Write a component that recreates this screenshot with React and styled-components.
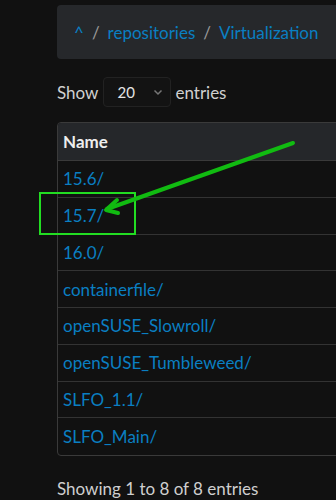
import React from "react";
import styled, { createGlobalStyle } from "styled-components";

const GlobalStyle = createGlobalStyle`
  html, body {
    margin: 0;
    padding: 0;
    background: #111111;
    overflow: hidden;
  }
  body {
    font-family: Lato, "Noto Sans", sans-serif;
    color: #cfcfcf;
  }
`;

const Page = styled.div`
  position: relative;
  width: 336px;
  height: 500px;
  overflow: hidden;
`;

const Content = styled.div`
  width: 420px;
  padding: 5px 0 0 57px;
  box-sizing: border-box;
  display: flex;
  flex-direction: column;
`;

const Breadcrumb = styled.nav`
  height: 54px;
  background: #26282b;
  border-radius: 4px;
  display: flex;
  align-items: center;
  gap: 8px;
  padding: 0 17px;
  font-size: 17px;
`;

const Crumb = styled.a`
  color: #0a7fc2;
  text-decoration: none;
`;

const Sep = styled.span`
  color: #9a9a9a;
`;

const LengthRow = styled.div`
  display: flex;
  align-items: center;
  height: 30px;
  margin-top: 18px;
  font-size: 17px;
  color: #d0d0d0;
`;

const Select = styled.div`
  width: 68px;
  height: 30px;
  box-sizing: border-box;
  margin: 0 4px 0 5px;
  border: 1px solid #222;
  border-radius: 4px;
  background: #131313;
  display: flex;
  align-items: center;
  justify-content: space-between;
  padding: 0 6px 0 13px;
  font-size: 15px;
  color: #e4e4e4;
`;

const Table = styled.div`
  margin-top: 15px;
  border: 1px solid #3a3a3a;
  border-radius: 4px;
  overflow: hidden;
`;

const HeadRow = styled.div`
  height: 37px;
  display: flex;
  align-items: center;
  padding-left: 5px;
  background: #25272a;
  border-bottom: 1px solid #3a3a3a;
  font-weight: bold;
  font-size: 17px;
  color: #eeeeee;
`;

const Row = styled.div`
  height: 35.75px;
  display: flex;
  align-items: center;
  padding-left: 5px;
  border-bottom: 1px solid ${(p) => (p.$last ? "transparent" : "#333333")};
  font-size: 17px;
`;

const Link = styled.a`
  color: #0a7fc2;
  text-decoration: none;
`;

const Info = styled.div`
  margin-top: 22px;
  font-size: 17px;
  color: #cfcfcf;
`;

const Overlay = styled.svg`
  position: absolute;
  left: 0;
  top: 0;
  pointer-events: none;
`;

const rows = [
  "15.6/",
  "15.7/",
  "16.0/",
  "containerfile/",
  "openSUSE_Slowroll/",
  "openSUSE_Tumbleweed/",
  "SLFO_1.1/",
  "SLFO_Main/",
];

export default function App() {
  return (
    <Page>
      <GlobalStyle />
      <Content>
        <Breadcrumb>
          <Crumb>^</Crumb>
          <Sep>/</Sep>
          <Crumb>repositories</Crumb>
          <Sep>/</Sep>
          <Crumb>Virtualization</Crumb>
        </Breadcrumb>
        <LengthRow>
          Show
          <Select>
            20
            <svg width="12" height="12" viewBox="0 0 12 12">
              <path d="M2.5 4.5 L6 8 L9.5 4.5" fill="none" stroke="#777" strokeWidth="1.5" />
            </svg>
          </Select>
          entries
        </LengthRow>
        <Table>
          <HeadRow>Name</HeadRow>
          {rows.map((r, i) => (
            <Row key={r} $last={i === rows.length - 1}>
              <Link>{r}</Link>
            </Row>
          ))}
        </Table>
        <Info>Showing 1 to 8 of 8 entries</Info>
      </Content>
      <Overlay width="336" height="500">
        <rect x="40" y="193" width="95" height="41" fill="none" stroke="#22dd22" strokeWidth="2" />
        <g stroke="#11bb11" strokeWidth="4" strokeLinecap="round" fill="none">
          <line x1="293" y1="143" x2="107" y2="209" />
          <polyline points="117,200 106,210 118,213" strokeLinejoin="round" />
        </g>
      </Overlay>
    </Page>
  );
}
